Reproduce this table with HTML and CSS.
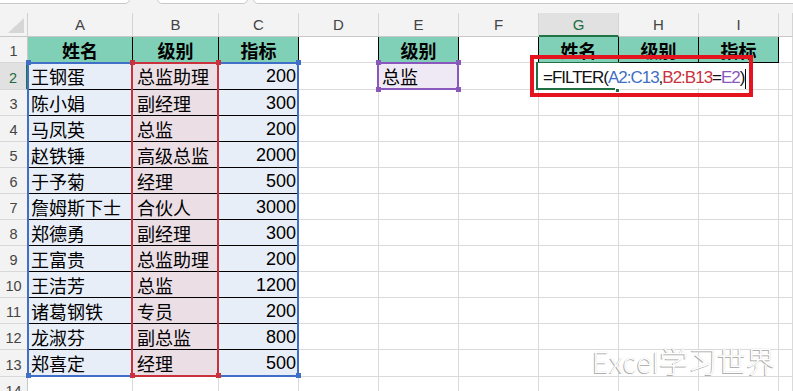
FILE: index.html
```html
<!DOCTYPE html>
<html lang="zh">
<head>
<meta charset="utf-8">
<title>FILTER</title>
<link rel="stylesheet" href="styles.css">
</head>
<body>
<div class="strip">
  <div class="box b1"></div>
  <div class="box b2"></div>
  <div class="box b3"></div>
</div>
<div class="sheet">
  <div class="corner"><svg width="27" height="23" viewBox="0 0 27 23"><polygon points="8,20 24,20 24,5" fill="#d6d6d6"/></svg></div>
  <div class="ch">A</div><div class="ch">B</div><div class="ch">C</div><div class="ch">D</div><div class="ch">E</div><div class="ch">F</div><div class="ch chs">G</div><div class="ch">H</div><div class="ch">I</div><div class="ch"></div>

  <div class="rh">1</div><div class="t">姓名</div><div class="t">级别</div><div class="t">指标</div><div class="kr"></div><div class="t">级别</div><div class="kr"></div><div class="t">姓名</div><div class="t">级别</div><div class="t">指标</div><div></div>

  <div class="rh rhs">2</div><div class="a">王钢蛋</div><div class="p">总监助理</div><div class="a n">200</div><div></div><div class="e">总监</div><div></div><div></div><div></div><div></div><div></div>
  <div class="rh">3</div><div class="a">陈小娟</div><div class="p">副经理</div><div class="a n">300</div><div></div><div></div><div></div><div></div><div></div><div></div><div></div>
  <div class="rh">4</div><div class="a">马凤英</div><div class="p">总监</div><div class="a n">200</div><div></div><div></div><div></div><div></div><div></div><div></div><div></div>
  <div class="rh">5</div><div class="a">赵铁锤</div><div class="p">高级总监</div><div class="a n">2000</div><div></div><div></div><div></div><div></div><div></div><div></div><div></div>
  <div class="rh">6</div><div class="a">于予菊</div><div class="p">经理</div><div class="a n">500</div><div></div><div></div><div></div><div></div><div></div><div></div><div></div>
  <div class="rh">7</div><div class="a">詹姆斯下士</div><div class="p">合伙人</div><div class="a n">3000</div><div></div><div></div><div></div><div></div><div></div><div></div><div></div>
  <div class="rh">8</div><div class="a">郑德勇</div><div class="p">副经理</div><div class="a n">300</div><div></div><div></div><div></div><div></div><div></div><div></div><div></div>
  <div class="rh">9</div><div class="a">王富贵</div><div class="p">总监助理</div><div class="a n">200</div><div></div><div></div><div></div><div></div><div></div><div></div><div></div>
  <div class="rh">10</div><div class="a">王洁芳</div><div class="p">总监</div><div class="a n">1200</div><div></div><div></div><div></div><div></div><div></div><div></div><div></div>
  <div class="rh">11</div><div class="a">诸葛钢铁</div><div class="p">专员</div><div class="a n">200</div><div></div><div></div><div></div><div></div><div></div><div></div><div></div>
  <div class="rh">12</div><div class="a">龙淑芬</div><div class="p">副总监</div><div class="a n">800</div><div></div><div></div><div></div><div></div><div></div><div></div><div></div>
  <div class="rh">13</div><div class="a">郑喜定</div><div class="p">经理</div><div class="a n">500</div><div></div><div></div><div></div><div></div><div></div><div></div><div></div>
  <div class="rh">14</div><div></div><div></div><div></div><div></div><div></div><div></div><div></div><div></div><div></div><div></div>
</div>

<div class="ov rng-blue"></div>
<div class="ov rng-red"></div>
<div class="ov rng-pur"></div>

<div class="ov hd hb" style="left:26px;top:60px"></div>
<div class="ov hd hb" style="left:296px;top:60px"></div>
<div class="ov hd hb" style="left:26px;top:373px"></div>
<div class="ov hd hb" style="left:296px;top:373px"></div>
<div class="ov hd hr" style="left:130px;top:60px"></div>
<div class="ov hd hr" style="left:216px;top:60px"></div>
<div class="ov hd hr" style="left:130px;top:373px"></div>
<div class="ov hd hr" style="left:216px;top:373px"></div>
<div class="ov hd hp" style="left:376px;top:60px"></div>
<div class="ov hd hp" style="left:456px;top:60px"></div>
<div class="ov hd hp" style="left:376px;top:87px"></div>
<div class="ov hd hp" style="left:456px;top:87px"></div>

<div class="ov gsel"></div>
<div class="ov edit"><span>=FILTER(</span><span class="fb">A2:C13</span><span>,</span><span class="fr">B2:B13</span><span>=</span><span class="fp">E2</span><span>)</span></div>
<div class="ov caret"></div>
<div class="ov fill"></div>
<div class="ov redbox"></div>

<div class="ov mark"><span class="mk-l">Excel</span><span class="mk-c">学习世界</span></div>
</body>
</html>
```

FILE: styles.css
```css
* { box-sizing: border-box; margin: 0; padding: 0; }
html, body { width: 793px; height: 391px; overflow: hidden; background: #fff; }
body { position: relative; font-family: "Noto Sans CJK SC", "Liberation Sans", sans-serif; }

.strip { height: 13px; background: #f3f3f3; position: relative; overflow: hidden; }
.box { position: absolute; top: -8px; height: 12px; background: #fff; border: 1px solid #c8c8c8; border-radius: 5px; }
.b1 { left: -6px; width: 136px; }
.b2 { left: 157px; width: 91px; }
.b3 { left: 253px; width: 560px; }

.sheet {
  display: grid;
  grid-template-columns: 28px 105px 86px repeat(7, 80px) 1fr;
  grid-template-rows: 24px 26px 27px repeat(10, 26px) 27px 26px;
}
.sheet > div {
  border-right: 1px solid #dadada;
  border-bottom: 1px solid #dadada;
  display: flex;
  align-items: center;
  font-size: 18px;
  line-height: 1;
  color: #000;
  white-space: nowrap;
  overflow: hidden;
}
.sheet .corner { background: #f3f3f3; border-right-color: #d0d0d0; border-bottom-color: #c8c8c8; }
.sheet .corner svg { display: block; }
.sheet .ch {
  background: #f3f3f3; justify-content: center;
  font-family: "Liberation Sans", Arial, sans-serif; font-size: 15px; color: #444;
  border-right-color: #d4d4d4; border-bottom-color: #c8c8c8;
}
.sheet .chs { background: #e1e1e1; color: #1d6b3f; border-bottom: 2px solid #217346; }
.sheet .rh {
  background: #f3f3f3; justify-content: center; padding-top: 4px;
  font-family: "Liberation Sans", Arial, sans-serif; font-size: 14.5px; color: #444;
  border-right-color: #c8c8c8; border-bottom-color: #d8d8d8;
}
.sheet .rhs { background: #e1e1e1; color: #1d6b3f; border-right: 2px solid #217346; }
.sheet .t { background: #80cfb7; font-weight: 700; justify-content: center; border-right-color: #000; border-bottom-color: #000; }
.sheet .kr { border-right-color: #000; }
.sheet .a { background: #e8eef8; border-right-color: #000; border-bottom-color: #000; padding-left: 3px; }
.sheet .p { background: #ebdee5; border-right-color: #000; border-bottom-color: #000; padding-left: 4px; }
.sheet .n { justify-content: flex-end; padding-right: 2px; padding-left: 0; font-family: "Liberation Sans", Arial, sans-serif; font-size: 18px; }
.sheet .e { background: #efe9f5; padding-left: 3px; border-right-color: #000; border-bottom-color: #000; }

.ov { position: absolute; }
.rng-blue { left: 27px; top: 62px; width: 272px; height: 315px; border: 2px solid #3f6fc6; }
.rng-red { left: 131px; top: 62px; width: 88px; height: 315px; border: 2px solid #c9313d; }
.rng-pur { left: 377px; top: 62px; width: 82px; height: 28px; border: 2px solid #8a58bd; }
.hd { width: 5px; height: 5px; }
.hb { background: #3f6fc6; }
.hr { background: #c9313d; }
.hp { background: #8a58bd; }

.gsel { left: 536px; top: 62px; width: 84px; height: 28px; border: 2px solid #1f6f43; border-right: none; }
.edit {
  left: 538px; top: 63px; width: 210px; height: 25px; background: #fff;
  padding-left: 5px; white-space: nowrap;
  font-family: "Liberation Sans", Arial, sans-serif; font-size: 17px; line-height: 30px;
  letter-spacing: -1px; color: #111;
}
.fb { color: #3f6fc6; }
.fr { color: #c9313d; }
.fp { color: #8a58bd; }
.caret { left: 745px; top: 69px; width: 1px; height: 20px; background: #000; }
.fill { left: 615px; top: 88px; width: 5px; height: 5px; background: #1f6f43; border: 1px solid #fff; }
.redbox { left: 530px; top: 55px; width: 223px; height: 42px; border: 4px solid #e5131d; }

.mark {
  left: 592px; top: 344px;
  font-size: 29px; line-height: 32px; color: #fff;
  text-shadow: -1px 1px 0 #b0b0b0, 0 0 1px #c8c8c8;
  white-space: nowrap;
}
.mk-l { font-family: "Lato", "Liberation Sans", sans-serif; font-weight: 300; letter-spacing: 0.5px; }
.mk-c { font-family: "Noto Sans CJK SC", sans-serif; font-weight: 300; }
```
